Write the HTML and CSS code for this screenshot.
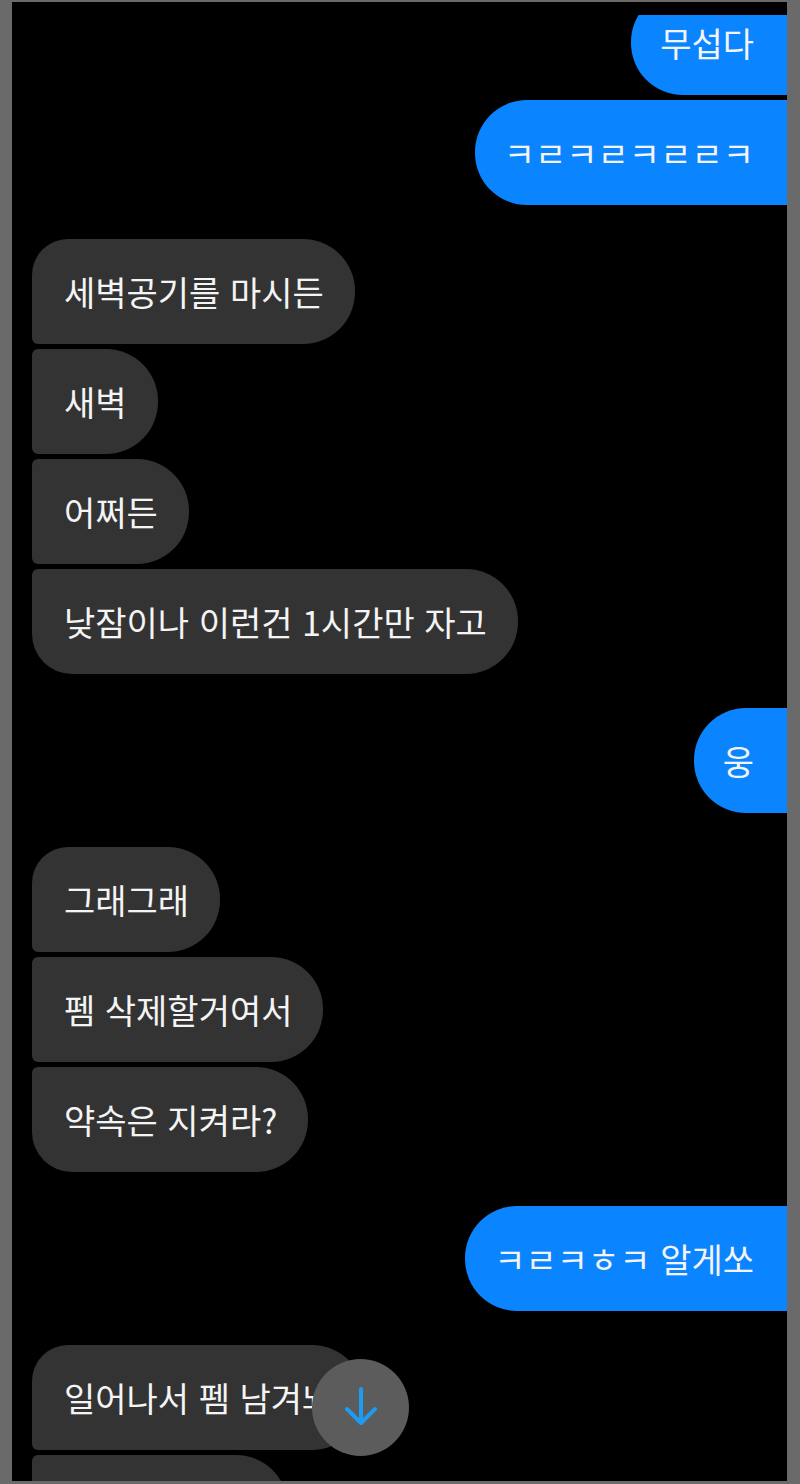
FILE: index.html
```html
<!DOCTYPE html>
<html lang="ko">
<head>
<meta charset="utf-8">
<title>Chat</title>
<link rel="stylesheet" href="styles.css">
</head>
<body>
<div class="screen">
  <div class="chat">
    <div class="group sent scrolled">
      <div class="bubble">무섭다</div>
      <div class="bubble">ㅋㄹㅋㄹㅋㄹㄹㅋ</div>
    </div>
    <div class="group recv">
      <div class="bubble first">세벽공기를 마시든</div>
      <div class="bubble">새벽</div>
      <div class="bubble">어쩌든</div>
      <div class="bubble last">낮잠이나 이런건 1시간만 자고</div>
    </div>
    <div class="group sent">
      <div class="bubble">웅</div>
    </div>
    <div class="group recv">
      <div class="bubble first">그래그래</div>
      <div class="bubble">펨 삭제할거여서</div>
      <div class="bubble last">약속은 지켜라?</div>
    </div>
    <div class="group sent">
      <div class="bubble">ㅋㄹㅋㅎㅋ 알게쏘</div>
    </div>
    <div class="group recv">
      <div class="bubble first">일어나서 펨 남겨놔</div>
      <div class="bubble peek" aria-hidden="true"></div>
    </div>
  </div>
  <button class="scroll-down" type="button" aria-label="맨 아래로">
    <svg viewBox="0 0 97 97" width="97" height="97" aria-hidden="true">
      <path d="M49 30 V63 M35 50 L49 64 L63 50" fill="none" stroke="#1d9bf0" stroke-width="4" stroke-linecap="round" stroke-linejoin="round"/>
    </svg>
  </button>
</div>
</body>
</html>
```

FILE: styles.css
```css
html, body {
  margin: 0;
  padding: 0;
}

body {
  background: #6a6a6a;
  width: 800px;
  height: 1484px;
  overflow: hidden;
  font-family: "Noto Sans CJK KR", "Noto Sans", sans-serif;
}

.screen {
  position: relative;
  margin: 2px 13px 0 12px;
  height: 1479px;
  background: #000;
  overflow: hidden;
}

.chat {
  margin-top: 13px;
  height: 1466px;
  overflow: hidden;
  display: flex;
  flex-direction: column;
  gap: 34px;
  padding: 0 0 0 20px;
}

.group {
  display: flex;
  flex-direction: column;
  gap: 5px;
}

.group.scrolled {
  margin-top: -25px;
}

.group.sent {
  align-items: flex-end;
}

.group.recv {
  align-items: flex-start;
}

.bubble {
  color: #f4f4f4;
  font-size: 34px;
  line-height: 39px;
  padding: 33px 31px 33px 32px;
  white-space: nowrap;
}

.sent .bubble {
  background: #0a84ff;
  border-radius: 52px 6px 6px 52px;
  margin-right: -8px;
  padding-left: 29px;
  padding-right: 41px;
}

.recv .bubble {
  background: #333333;
  border-radius: 6px 52px 52px 6px;
}

.recv .bubble.first {
  border-top-left-radius: 36px;
}

.recv .bubble.last {
  border-bottom-left-radius: 40px;
}

.bubble.peek {
  width: 256px;
  height: 105px;
  padding: 0;
  box-sizing: border-box;
}

.scroll-down {
  position: absolute;
  left: 300px;
  top: 1357px;
  width: 97px;
  height: 97px;
  padding: 0;
  border: none;
  border-radius: 50%;
  background: #5c5c5c;
  display: block;
}

.scroll-down svg {
  display: block;
}
```
